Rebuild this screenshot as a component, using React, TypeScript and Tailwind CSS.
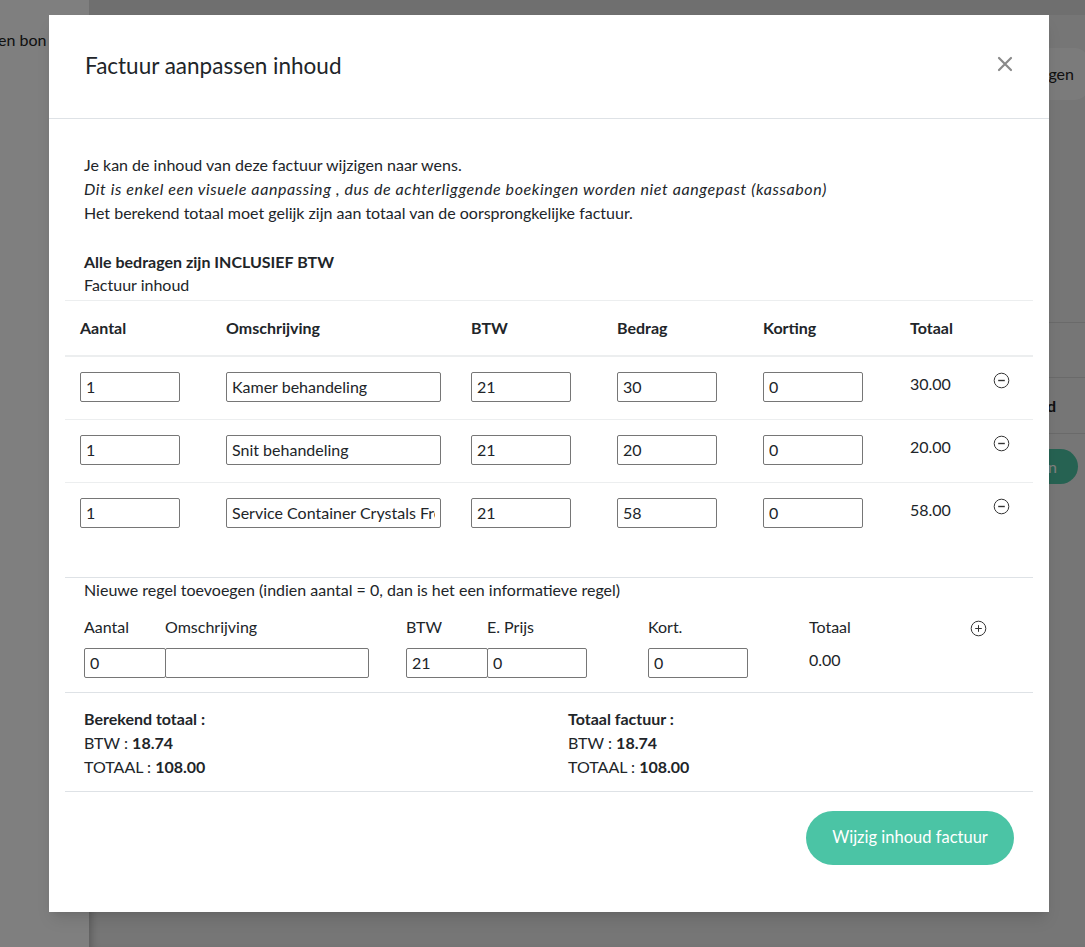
import React from 'react'

function MinusCircle() {
  return (
    <svg width="17" height="17" viewBox="0 0 17 17" fill="none">
      <circle cx="8.5" cy="8.5" r="7.3" stroke="#333" strokeWidth="1" />
      <line x1="5.2" y1="8.5" x2="11.8" y2="8.5" stroke="#333" strokeWidth="1.4" />
    </svg>
  )
}

function PlusCircle() {
  return (
    <svg width="17" height="17" viewBox="0 0 17 17" fill="none">
      <circle cx="8.5" cy="8.5" r="7.3" stroke="#333" strokeWidth="1" />
      <line x1="5.2" y1="8.5" x2="11.8" y2="8.5" stroke="#333" strokeWidth="1" />
      <line x1="8.5" y1="5.2" x2="8.5" y2="11.8" stroke="#333" strokeWidth="1" />
    </svg>
  )
}

function CloseIcon() {
  return (
    <svg width="16" height="16" viewBox="0 0 16 16" fill="none">
      <path d="M2 2 L14 14 M14 2 L2 14" stroke="#8a8a8a" strokeWidth="2.2" strokeLinecap="round" />
    </svg>
  )
}

const inputCls =
  'h-[30px] border border-[#767676] rounded-[2px] px-[5px] text-[16px] text-[#212529] bg-white outline-none'

const rows = [
  { aantal: '1', omschr: 'Kamer behandeling', btw: '21', bedrag: '30', korting: '0', totaal: '30.00' },
  { aantal: '1', omschr: 'Snit behandeling', btw: '21', bedrag: '20', korting: '0', totaal: '20.00' },
  { aantal: '1', omschr: 'Service Container Crystals Fresh', btw: '21', bedrag: '58', korting: '0', totaal: '58.00' },
]

function Background() {
  return (
    <div className="flex h-[947px] w-full overflow-hidden font-['Lato',sans-serif]">
      <div className="w-[89px] shrink-0 bg-white pt-[28px] text-[16px] text-[#222] overflow-hidden whitespace-nowrap">
        <div className="-ml-[2px]">en bon</div>
      </div>
      <div className="flex-1 bg-[#ececec] shadow-[inset_8px_0_8px_-6px_rgba(0,0,0,0.25)] flex flex-col">
        <div className="h-[15px] bg-[#dedede]" />
        <div className="flex justify-end pt-[33px]">
          <div className="h-[52px] -mr-[5px] rounded-[16px] bg-[#f7f7f7] px-[16px] flex items-center text-[16px] text-[#222]">
            Toevoegen
          </div>
        </div>
        <div className="mt-[222px] flex flex-col ml-auto w-[300px]">
          <div className="border-t border-[#d5d5d5] h-[55px]" />
          <div className="border-t border-[#d5d5d5] h-[56px] flex items-center justify-end pr-[29px] font-bold text-[16px] text-[#222]">
            Totaal bedrag d
          </div>
          <div className="border-t border-[#d5d5d5] pt-[15px] flex justify-end pr-[7px]">
            <div className="h-[35px] rounded-full bg-[#4cc4a5] text-white text-[16px] flex items-center px-[21px]">
              Opslaan
            </div>
          </div>
        </div>
      </div>
    </div>
  )
}

export default function App() {
  return (
    <div className="relative">
      <Background />
      <div className="absolute inset-0 bg-black/50">
        <div className="ml-[49px] mt-[15px] w-[1000px] bg-white text-[#212529] shadow-lg font-['Lato',sans-serif]">
          <div className="h-[104px] flex items-center justify-between pl-[36px] pr-[36px] border-b border-[#dee2e6]">
            <h2 className="text-[22.5px] font-normal -mt-[2px]">Factuur aanpassen inhoud</h2>
            <button className="-mt-[6px]">
              <CloseIcon />
            </button>
          </div>

          <div className="px-[16px] pt-[34px]">
            <div className="px-[19px] text-[16px] leading-[24px]">
              <p>Je kan de inhoud van deze factuur wijzigen naar wens.</p>
              <p className="italic tracking-[0.6px]">
                Dit is enkel een visuele aanpassing , dus de achterliggende boekingen worden niet aangepast (kassabon)
              </p>
              <p>Het berekend totaal moet gelijk zijn aan totaal van de oorsprongkelijke factuur.</p>
              <p className="mt-[25px] font-bold">Alle bedragen zijn INCLUSIEF BTW</p>
              <p className="-mt-[1px]">Factuur inhoud</p>
            </div>

            <table className="mt-[3px] w-full border-collapse text-[16px] mb-[32px]">
              <colgroup>
                <col className="w-[146px]" />
                <col className="w-[245px]" />
                <col className="w-[146px]" />
                <col className="w-[146px]" />
                <col className="w-[147px]" />
                <col className="w-[90px]" />
                <col />
              </colgroup>
              <thead>
                <tr className="border-t border-[#eceeef] border-b-2 border-b-[#eceeef] h-[55px] text-left">
                  {['Aantal', 'Omschrijving', 'BTW', 'Bedrag', 'Korting', 'Totaal', ''].map((h, i) => (
                    <th key={i} className="px-[15px] font-bold align-middle">
                      {h}
                    </th>
                  ))}
                </tr>
              </thead>
              <tbody>
                {rows.map((r, i) => (
                  <tr key={i} className={i < rows.length - 1 ? 'border-b border-[#eceeef]' : ''}>
                    <td className="pl-[15px] pt-[15px] pb-[17px] align-top">
                      <input className={`${inputCls} w-[100px]`} defaultValue={r.aantal} />
                    </td>
                    <td className="pl-[15px] pt-[15px] pb-[17px] align-top">
                      <input className={`${inputCls} w-[215px]`} defaultValue={r.omschr} />
                    </td>
                    <td className="pl-[15px] pt-[15px] pb-[17px] align-top">
                      <input className={`${inputCls} w-[100px]`} defaultValue={r.btw} />
                    </td>
                    <td className="pl-[15px] pt-[15px] pb-[17px] align-top">
                      <input className={`${inputCls} w-[100px]`} defaultValue={r.bedrag} />
                    </td>
                    <td className="pl-[15px] pt-[15px] pb-[17px] align-top">
                      <input className={`${inputCls} w-[100px]`} defaultValue={r.korting} />
                    </td>
                    <td className="pl-[15px] pt-[15px] align-top leading-[24px]">{r.totaal}</td>
                    <td className="pl-[8px] pt-[15px] align-top">
                      <MinusCircle />
                    </td>
                  </tr>
                ))}
              </tbody>
            </table>

            <div className="border-t border-[#dee2e6] px-[19px] pb-[14px] text-[16px]">
              <p className="leading-[24px]">Nieuwe regel toevoegen (indien aantal = 0, dan is het een informatieve regel)</p>
              <div className="mt-[13px] flex leading-[24px]">
                <div className="w-[81px]">Aantal</div>
                <div className="w-[241px]">Omschrijving</div>
                <div className="w-[81px]">BTW</div>
                <div className="w-[161px]">E. Prijs</div>
                <div className="w-[161px]">Kort.</div>
                <div className="w-[161px]">Totaal</div>
                <div className="pt-[5px]">
                  <PlusCircle />
                </div>
              </div>
              <div className="mt-[9px] flex">
                <div className="w-[81px]">
                  <input className={`${inputCls} w-[82px]`} defaultValue="0" />
                </div>
                <div className="w-[241px]">
                  <input className={`${inputCls} w-[204px]`} defaultValue="" />
                </div>
                <div className="w-[81px]">
                  <input className={`${inputCls} w-[82px]`} defaultValue="21" />
                </div>
                <div className="w-[161px]">
                  <input className={`${inputCls} w-[100px]`} defaultValue="0" />
                </div>
                <div className="w-[161px]">
                  <input className={`${inputCls} w-[100px]`} defaultValue="0" />
                </div>
                <div className="w-[161px] leading-[24px]">0.00</div>
              </div>
            </div>

            <div className="border-t border-b border-[#dee2e6] px-[19px] pt-[14px] pb-[12px] text-[16px] leading-[24px] flex">
              <div className="w-[484px]">
                <p className="font-bold">Berekend totaal :</p>
                <p>
                  BTW : <b>18.74</b>
                </p>
                <p>
                  TOTAAL : <b>108.00</b>
                </p>
              </div>
              <div>
                <p className="font-bold">Totaal factuur :</p>
                <p>
                  BTW : <b>18.74</b>
                </p>
                <p>
                  TOTAAL : <b>108.00</b>
                </p>
              </div>
            </div>

            <div className="flex justify-end pt-[19px] pb-[47px] pr-[19px]">
              <button className="h-[54px] w-[208px] rounded-full bg-[#4bc4a5] text-white text-[16.5px]">
                Wijzig inhoud factuur
              </button>
            </div>
          </div>
        </div>
      </div>
    </div>
  )
}
